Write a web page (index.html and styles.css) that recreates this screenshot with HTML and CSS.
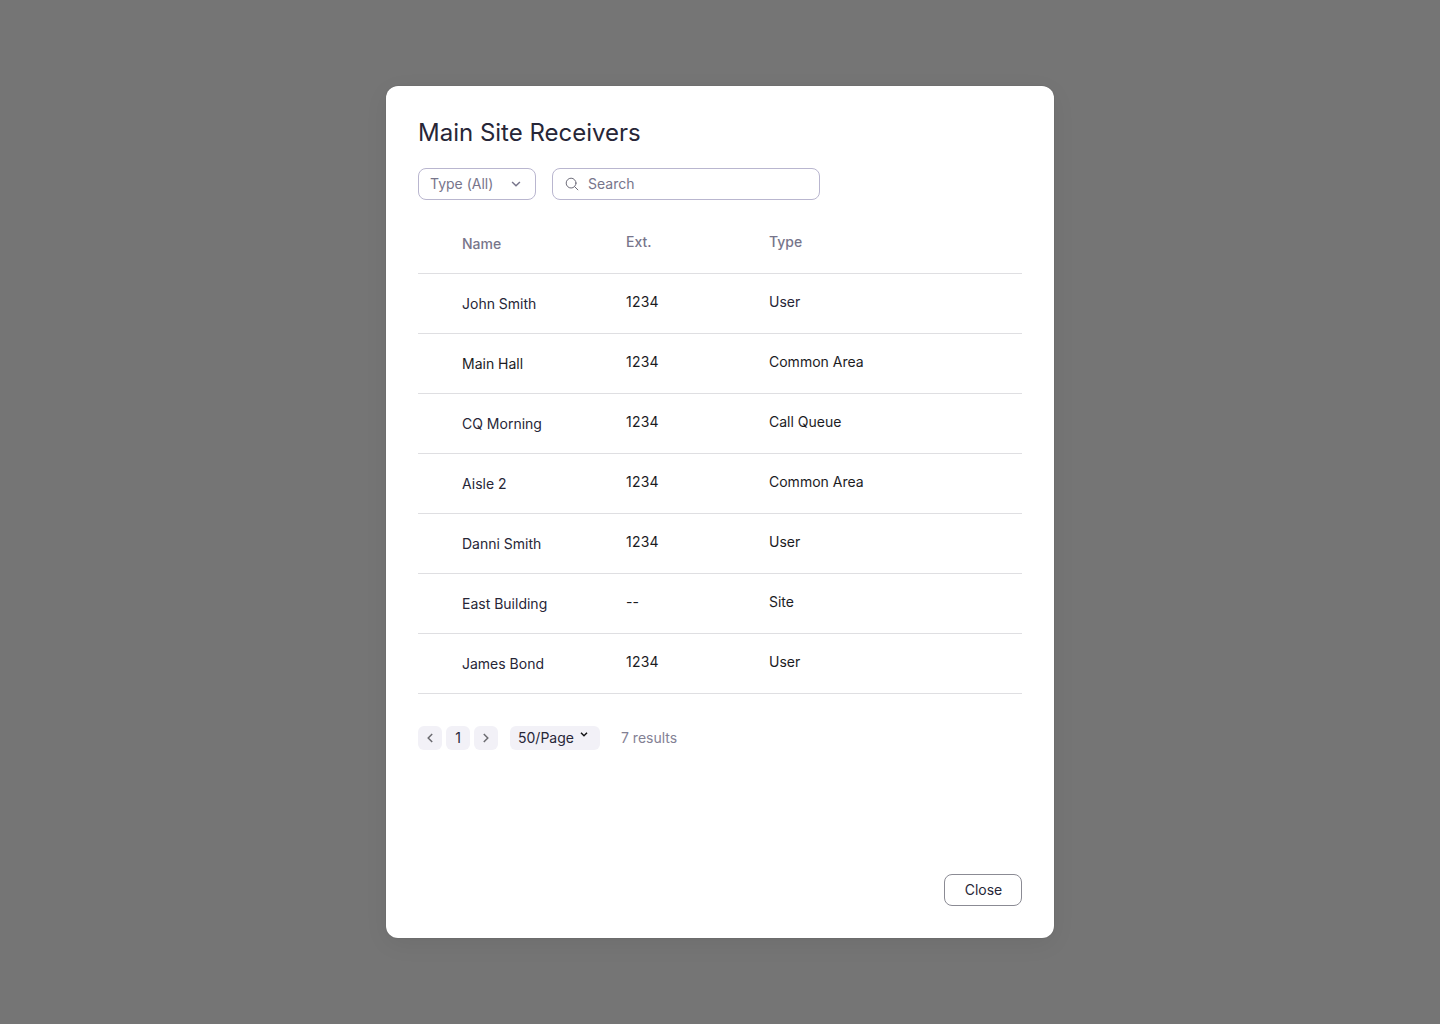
FILE: index.html
```html
<!DOCTYPE html>
<html lang="en">
<head>
<meta charset="utf-8">
<title>Main Site Receivers</title>
<link rel="stylesheet" href="styles.css">
</head>
<body>
<main class="dialog">
  <h1 class="title">Main Site Receivers</h1>
  <div class="filters">
    <button class="select">Type (All)
      <svg width="10" height="6" viewBox="0 0 10 6" fill="none" stroke="currentColor" stroke-width="1.5"><path d="M1.1 1 5 4.7 8.9 1"/></svg>
    </button>
    <div class="search">
      <svg width="14" height="14" viewBox="0 0 14 14" fill="none" stroke="#6c6b78" stroke-linecap="round"><circle cx="6.1" cy="6.1" r="4.9"/><path d="M9.7 9.7 12.9 12.9"/></svg>
      <span>Search</span>
    </div>
  </div>
  <div class="table">
    <div class="row head"><span class="name">Name</span><span>Ext.</span><span>Type</span></div>
    <div class="row"><span class="name">John Smith</span><span class="ext">1234</span><span class="ink">User</span></div>
    <div class="row"><span class="name dark">Main Hall</span><span class="ext">1234</span><span>Common Area</span></div>
    <div class="row"><span class="name">CQ Morning</span><span class="ext">1234</span><span>Call Queue</span></div>
    <div class="row"><span class="name">Aisle 2</span><span class="ext">1234</span><span>Common Area</span></div>
    <div class="row"><span class="name">Danni Smith</span><span class="ext">1234</span><span>User</span></div>
    <div class="row"><span class="name">East Building</span><span>--</span><span>Site</span></div>
    <div class="row"><span class="name">James Bond</span><span class="ext">1234</span><span>User</span></div>
  </div>
  <div class="pager">
    <button class="page"><svg width="6" height="10" viewBox="0 0 6 10" fill="none" stroke="#6b6b70" stroke-width="1.5"><path d="M5.2 0.9 1.2 5 5.2 9.1"/></svg></button>
    <button class="page">1</button>
    <button class="page"><svg width="6" height="10" viewBox="0 0 6 10" fill="none" stroke="#6b6b70" stroke-width="1.5"><path d="M0.8 0.9 4.8 5 0.8 9.1"/></svg></button>
    <button class="page size">50/Page
      <svg class="caret" width="8" height="5" viewBox="0 0 8 5" fill="none" stroke="#131316" stroke-width="1.5"><path d="M1 0.8 4 3.7 7 0.8"/></svg>
    </button>
    <span class="results">7 results</span>
  </div>
  <div class="actions"><button class="close">Close</button></div>
</main>
</body>
</html>
```
FILE: styles.css
```css
* { box-sizing: border-box; }

body {
  margin: 0;
  height: 1024px;
  display: flex;
  align-items: center;
  justify-content: center;
  background: #757575;
  font: 14px/20px Inter, sans-serif;
  color: #272637;
}

button {
  font: inherit;
  color: inherit;
  margin: 0;
}

svg { display: block; flex: none; }

.dialog {
  width: 668px;
  height: 852px;
  padding: 32px;
  display: flex;
  flex-direction: column;
  background: #fff;
  border-radius: 12px;
  box-shadow: 0 6px 24px rgba(0, 0, 0, 0.06), 0 0 1px rgba(0, 0, 0, 0.3);
}

.title {
  margin: 0 0 20px;
  font-size: 24px;
  line-height: 30px;
  font-weight: 400;
}

.filters {
  display: flex;
  gap: 16px;
}

.select,
.search {
  height: 32px;
  display: flex;
  align-items: center;
  border: 1px solid #b9b6cf;
  border-radius: 8px;
  background: #fff;
  color: #77758b;
}

.select {
  width: 118px;
  padding: 0 14px 0 11px;
  justify-content: space-between;
}

.search {
  width: 268px;
  padding-left: 12px;
  gap: 9px;
}

.table { margin-top: 14px; }

.row {
  height: 60px;
  display: grid;
  grid-template-columns: 164px 143px 1fr;
  align-items: center;
  padding: 0 0 3px 44px;
  border-bottom: 1px solid #dfdfe2;
  color: #1c1c1f;
}

.row .name {
  padding-top: 4px;
  color: #272637;
}

.row .dark { color: #1c1c1f; }
.row .ink { color: #272637; }
.ext { letter-spacing: 0.2px; }

.head,
.row.head .name {
  color: #77758b;
  font-weight: 500;
}

.pager {
  display: flex;
  align-items: center;
  gap: 4px;
  margin-top: 32px;
}

.page {
  width: 24px;
  height: 24px;
  padding: 0;
  display: flex;
  align-items: center;
  justify-content: center;
  border: 0;
  border-radius: 6px;
  background: #f2f1f7;
}

.size {
  width: 90px;
  margin-left: 8px;
  padding: 0 12px 0 8px;
  justify-content: space-between;
}

.caret { margin-bottom: 8px; }

.results {
  margin-left: 17px;
  color: #838194;
}

.actions {
  margin-top: auto;
  display: flex;
  justify-content: flex-end;
}

.close {
  width: 78px;
  height: 32px;
  padding: 0 0 0 1px;
  border: 1px solid #8b8b94;
  border-radius: 8px;
  background: #fff;
}
```
